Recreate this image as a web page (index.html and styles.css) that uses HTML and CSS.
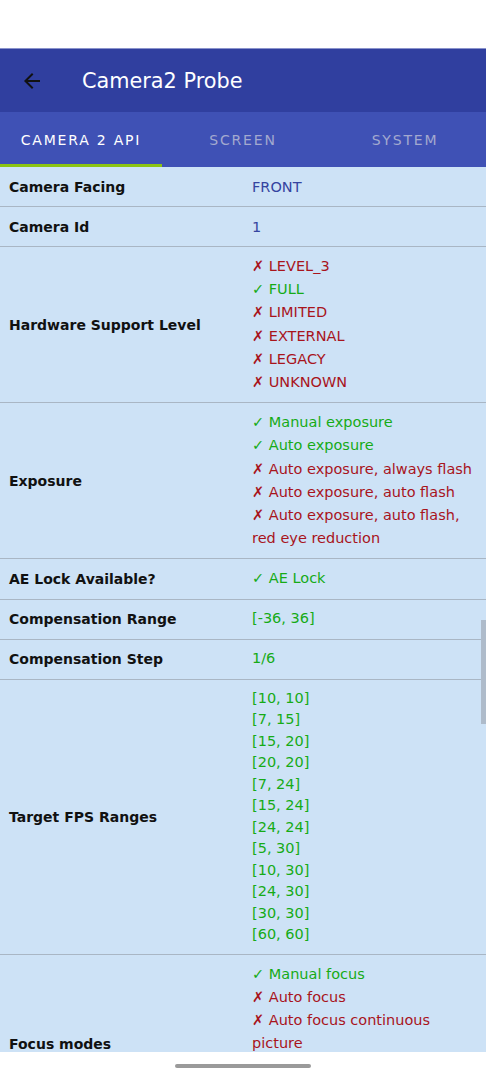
FILE: index.html
```html
<!DOCTYPE html>
<html lang="en">
<head>
    <meta charset="UTF-8">
    <meta name="viewport" content="width=device-width, initial-scale=1.0">
    <title>Camera2 Probe</title>
    <link rel="stylesheet" href="styles.css">
</head>
<body>
<div class="status-bar"></div>
<header class="app-bar">
    <svg class="back" width="24" height="24" viewBox="0 0 24 24">
        <path d="M20 11H7.83l5.59-5.59L12 4l-8 8 8 8 1.41-1.41L7.83 13H20v-2z" fill="#111"/>
    </svg>
    <h1>Camera2 Probe</h1>
</header>
<nav class="tabs">
    <div class="tab active">CAMERA 2 API</div>
    <div class="tab">SCREEN</div>
    <div class="tab">SYSTEM</div>
</nav>
<main class="content">
    <div class="row">
        <div class="label">Camera Facing</div>
        <div class="value"><div class="info">FRONT</div></div>
    </div>
    <div class="row">
        <div class="label">Camera Id</div>
        <div class="value"><div class="info">1</div></div>
    </div>
    <div class="row">
        <div class="label">Hardware Support Level</div>
        <div class="value">
            <div class="no">✗ LEVEL_3</div>
            <div class="yes">✓ FULL</div>
            <div class="no">✗ LIMITED</div>
            <div class="no">✗ EXTERNAL</div>
            <div class="no">✗ LEGACY</div>
            <div class="no">✗ UNKNOWN</div>
        </div>
    </div>
    <div class="row">
        <div class="label">Exposure</div>
        <div class="value">
            <div class="yes">✓ Manual exposure</div>
            <div class="yes">✓ Auto exposure</div>
            <div class="no">✗ Auto exposure, always flash</div>
            <div class="no">✗ Auto exposure, auto flash</div>
            <div class="no">✗ Auto exposure, auto flash, red eye reduction</div>
        </div>
    </div>
    <div class="row">
        <div class="label">AE Lock Available?</div>
        <div class="value"><div class="yes">✓ AE Lock</div></div>
    </div>
    <div class="row">
        <div class="label">Compensation Range</div>
        <div class="value"><div class="plain">[-36, 36]</div></div>
    </div>
    <div class="row">
        <div class="label">Compensation Step</div>
        <div class="value"><div class="plain">1/6</div></div>
    </div>
    <div class="row">
        <div class="label">Target FPS Ranges</div>
        <div class="value">
            <div class="plain">[10, 10]</div>
            <div class="plain">[7, 15]</div>
            <div class="plain">[15, 20]</div>
            <div class="plain">[20, 20]</div>
            <div class="plain">[7, 24]</div>
            <div class="plain">[15, 24]</div>
            <div class="plain">[24, 24]</div>
            <div class="plain">[5, 30]</div>
            <div class="plain">[10, 30]</div>
            <div class="plain">[24, 30]</div>
            <div class="plain">[30, 30]</div>
            <div class="plain">[60, 60]</div>
        </div>
    </div>
    <div class="row">
        <div class="label">Focus modes</div>
        <div class="value">
            <div class="yes">✓ Manual focus</div>
            <div class="no">✗ Auto focus</div>
            <div class="no">✗ Auto focus continuous picture</div>
            <div class="no">✗ Auto focus continuous video</div>
            <div class="no">✗ Auto focus EDOF</div>
        </div>
    </div>
    <div class="scroll-thumb"></div>
</main>
<div class="nav-bar"><div class="handle"></div></div>
</body>
</html>
```
FILE: styles.css
```css
html, body {
    margin: 0;
    height: 100%;
    overflow: hidden;
}
body {
    display: flex;
    flex-direction: column;
    font-family: "DejaVu Sans", sans-serif;
    background: #fff;
}
.status-bar {
    height: 48px;
    flex: none;
    background: #fff;
}
.app-bar {
    height: 64px;
    flex: none;
    display: flex;
    align-items: center;
    background: #303f9f;
    border-top: 1px solid #8a93cc;
    box-sizing: border-box;
}
.back {
    margin-left: 20px;
    margin-right: 38px;
}
.app-bar h1 {
    margin: 0;
    color: #fff;
    font-size: 20.8px;
    font-weight: normal;
}
.tabs {
    height: 55px;
    flex: none;
    display: flex;
    background: #3f51b5;
}
.tab {
    flex: 1;
    display: flex;
    align-items: center;
    justify-content: center;
    font-size: 14px;
    letter-spacing: 1.8px;
    color: #a3a9cf;
    font-weight: 500;
    border-bottom: 3px solid transparent;
    box-sizing: border-box;
    padding-top: 3px;
}
.tab.active {
    color: #fff;
    border-bottom-color: #8cc411;
}
.content {
    flex: 1;
    background: #cde2f6;
    overflow: hidden;
    position: relative;
}
.row {
    display: flex;
    align-items: center;
    min-height: 40px;
    box-sizing: border-box;
    border-bottom: 1px solid #a9b6c4;
    padding: 8px 0;
}
.label {
    width: 252px;
    flex: none;
    padding-left: 9px;
    box-sizing: border-box;
    font-weight: bold;
    font-size: 14px;
    color: #111;
}
.value {
    flex: 1;
    font-size: 14.5px;
    padding-right: 12px;
}
.info {
    color: #3544a0;
    line-height: 22px;
}
.plain {
    color: #16ab16;
    line-height: 21.5px;
}
.yes {
    color: #16ab16;
    line-height: 23.2px;
}
.no {
    color: #a8141c;
    line-height: 23.2px;
}
.scroll-thumb {
    position: absolute;
    right: 0;
    top: 453px;
    width: 5px;
    height: 104px;
    background: #aebbca;
}
.nav-bar {
    height: 28px;
    flex: none;
    display: flex;
    justify-content: center;
    align-items: center;
    background: #fff;
}
.handle {
    width: 136px;
    height: 4px;
    border-radius: 2px;
    background: #9a9a9a;
}
```
